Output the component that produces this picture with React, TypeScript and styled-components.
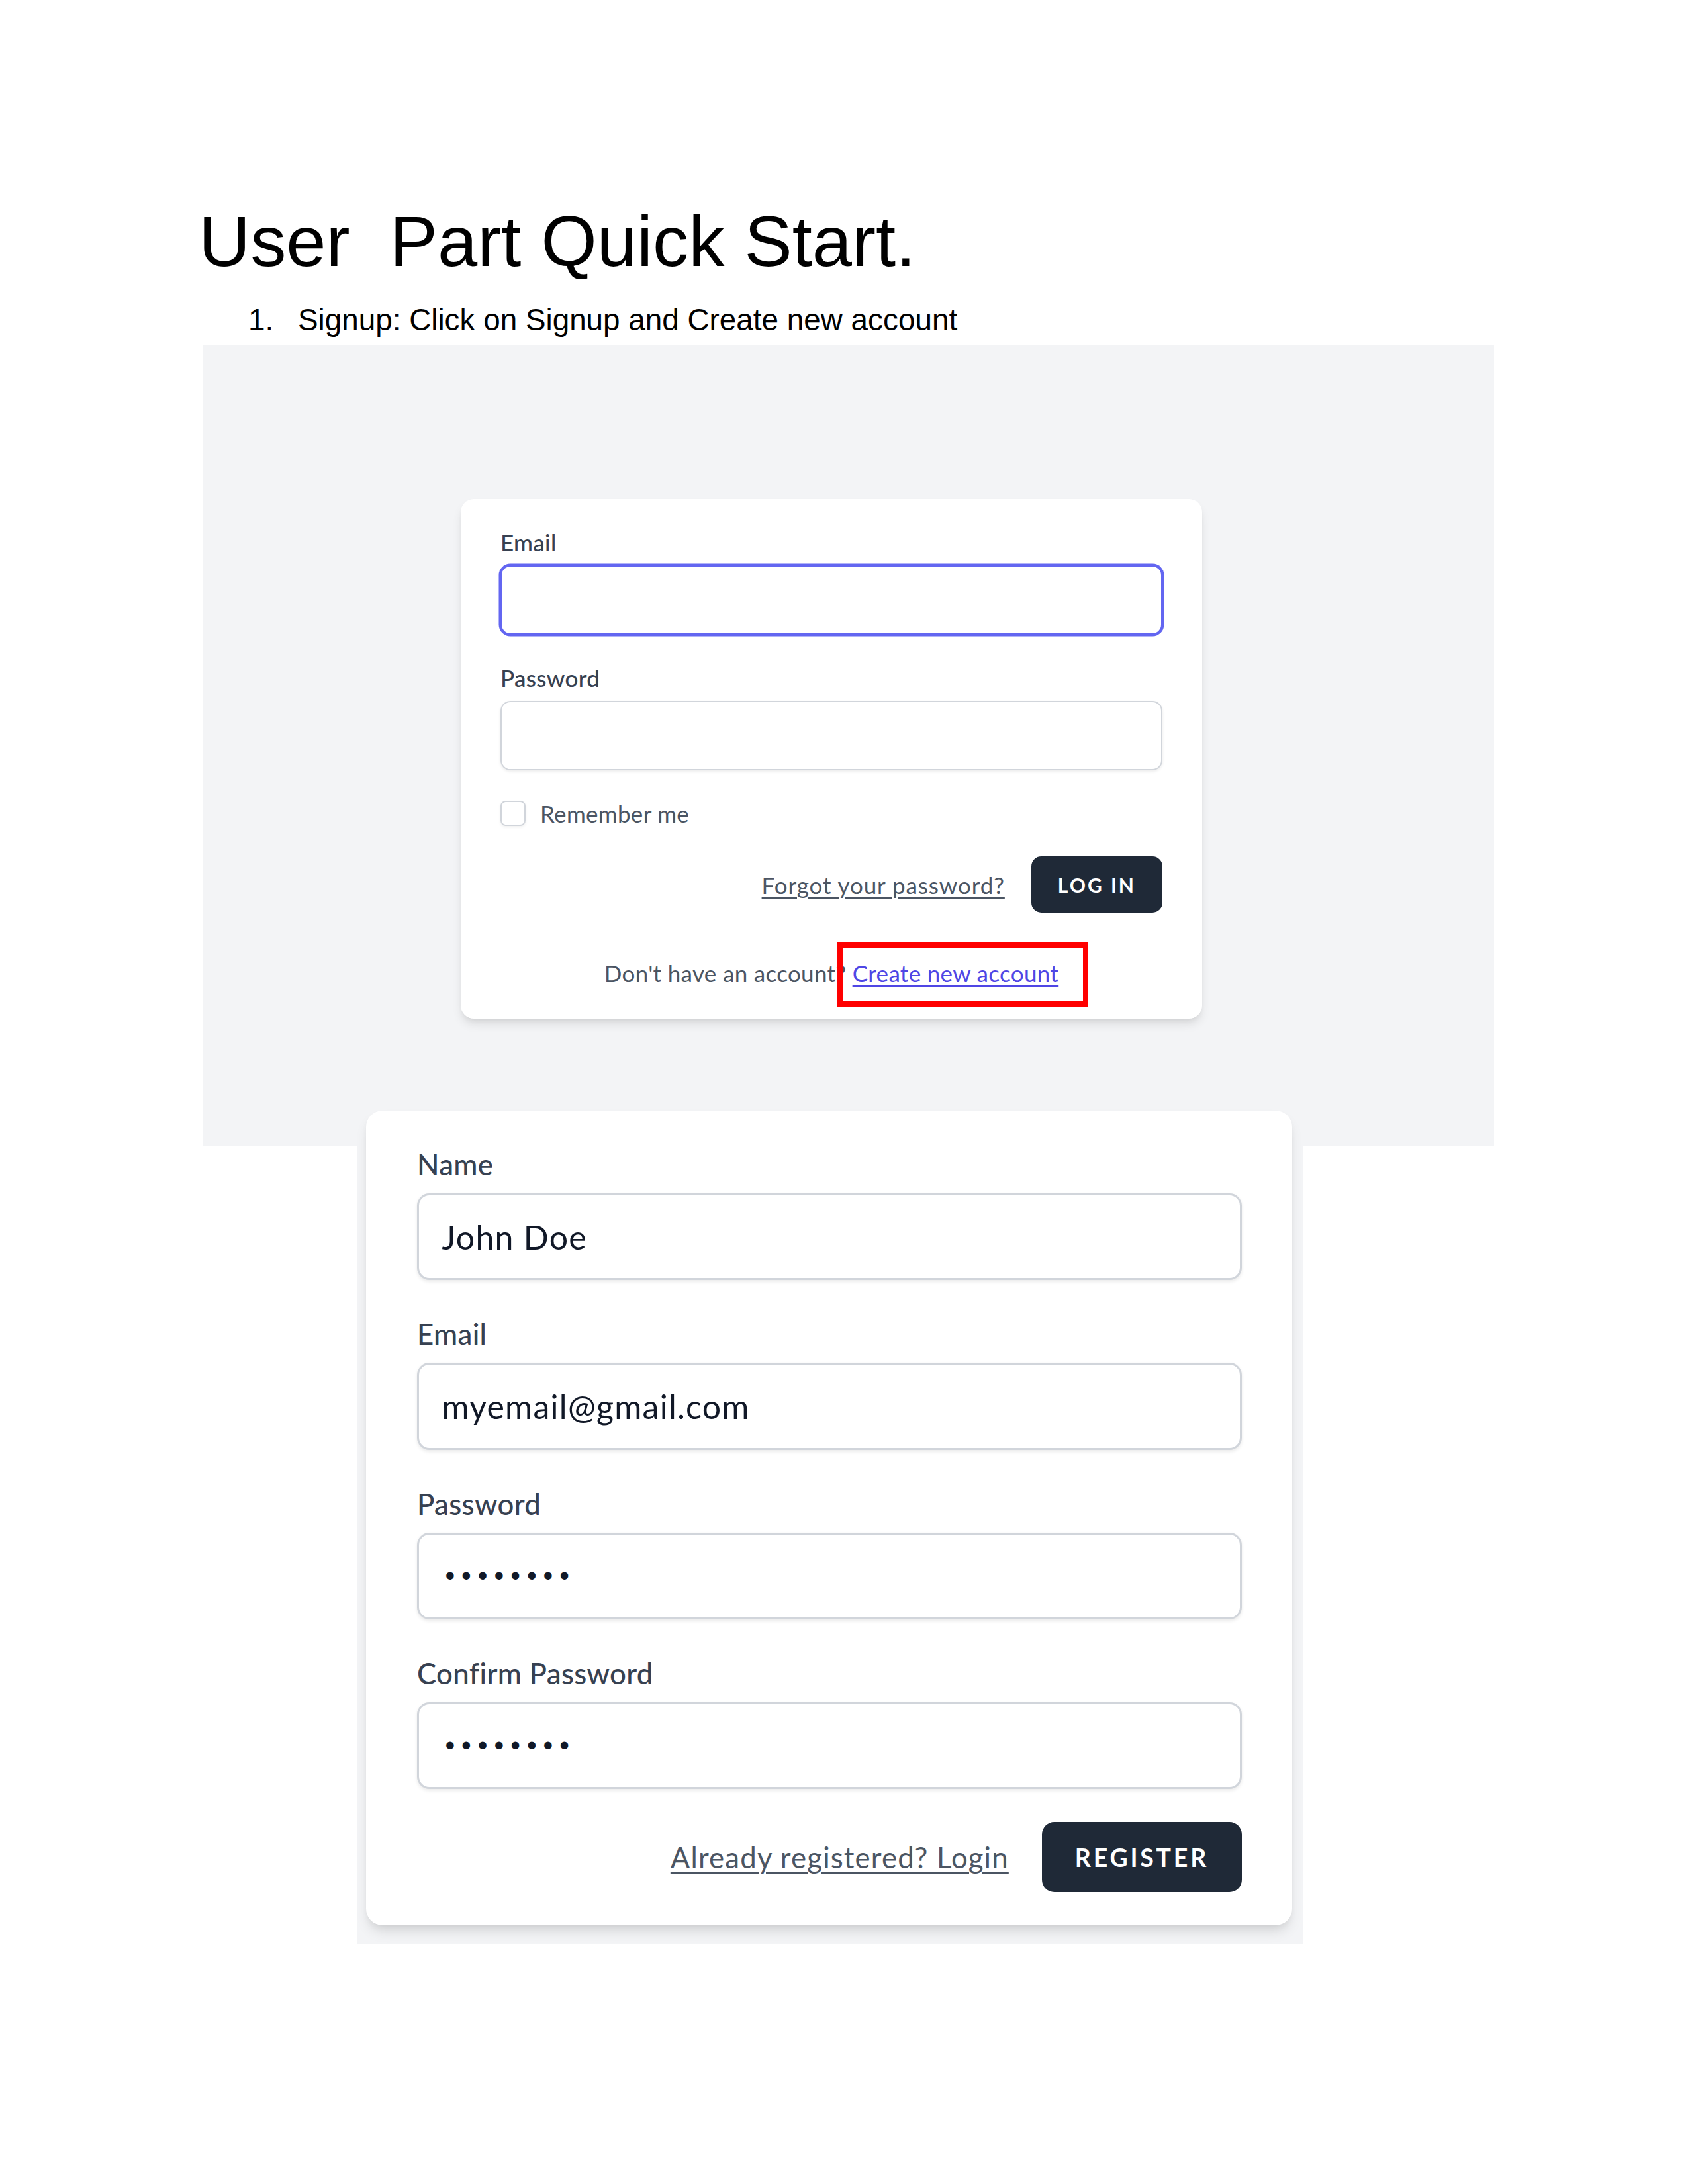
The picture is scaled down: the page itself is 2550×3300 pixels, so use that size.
import React from "react";
import styled, { createGlobalStyle } from "styled-components";

const Global = createGlobalStyle`
  html, body { margin: 0; padding: 0; background: #ffffff; }
  #root { width: 2550px; min-height: 3300px; }
  * { box-sizing: border-box; }
`;

const Page = styled.div`
  width: 2550px;
  min-height: 3300px;
  padding: 303px 0 0 300px;
  background: #ffffff;
  display: flex;
  flex-direction: column;
  align-items: flex-start;
`;

const Title = styled.h1`
  margin: 0;
  font-family: "Liberation Sans", Arial, sans-serif;
  font-weight: 400;
  font-size: 108.3px;
  line-height: 124px;
  color: #000;
  white-space: pre;
`;

const ListItem = styled.div`
  margin-top: 30px;
  display: flex;
  font-family: "Liberation Sans", Arial, sans-serif;
  font-size: 45.83px;
  line-height: 53px;
  color: #000;
`;

const ListNum = styled.span`
  width: 150px;
  padding-left: 75px;
`;

const LoginPanel = styled.section`
  margin: 11px 0 0 6px;
  width: 1951px;
  height: 1210px;
  background: #f3f4f6;
  padding: 233px 0 0 390px;
`;

const Card = styled.div<{ $scale: number; $w: number }>`
  width: ${(p) => p.$w}px;
  background: #ffffff;
  border-radius: ${(p) => 8 * p.$scale}px;
  box-shadow: 0 ${(p) => 4 * p.$scale}px ${(p) => 6 * p.$scale}px -${(p) => 1 * p.$scale}px rgba(0, 0, 0, 0.1),
    0 ${(p) => 2 * p.$scale}px ${(p) => 4 * p.$scale}px -${(p) => 2 * p.$scale}px rgba(0, 0, 0, 0.1);
  font-family: Lato, "Open Sans", sans-serif;
  letter-spacing: 0.02em;
`;

const LoginCard = styled(Card)`
  padding: 40px 60px 44px 60px;
`;

const RegisterFrame = styled.section`
  position: relative;
  margin: -65px 0 0 240px;
  width: 1429px;
  background: #f3f4f6;
  padding: 12px 17px 29px 13px;
`;

const RegisterCard = styled(Card)`
  padding: 50px 76px 50px 77px;
`;

const Group = styled.div<{ $gap: number }>`
  margin-top: ${(p) => p.$gap}px;
`;

const Label = styled.div<{ $size: number }>`
  font-size: ${(p) => p.$size}px;
  line-height: ${(p) => (p.$size * 20) / 14}px;
  font-weight: 500;
  color: #374151;
`;

const Field = styled.div<{ $scale: number; $focused?: boolean; $size: number }>`
  margin-top: ${(p) => 4 * p.$scale}px;
  height: ${(p) => 42 * p.$scale}px;
  border: ${(p) => p.$scale}px solid ${(p) => (p.$focused ? "#6366f1" : "#d1d5db")};
  border-radius: ${(p) => 6 * p.$scale}px;
  background: #fff;
  box-shadow: ${(p) =>
    p.$focused
      ? `0 0 0 ${p.$scale}px #6366f1`
      : `0 ${p.$scale * 0.8}px ${p.$scale * 1.6}px rgba(0, 0, 0, 0.08)`};
  display: flex;
  align-items: center;
  padding: 0 ${(p) => 12 * p.$scale - p.$scale}px;
  font-size: ${(p) => p.$size}px;
  letter-spacing: 0.025em;
  color: #111827;
  white-space: pre;
`;

const Dots = styled.span`
  font-family: "Liberation Sans", Arial, sans-serif;
  font-size: 42px;
  letter-spacing: 10px;
  color: #111827;
  margin-left: 5px;
`;

const RememberRow = styled.label`
  margin-top: 40px;
  height: 50px;
  display: flex;
  align-items: center;
  gap: 22px;
  font-size: 35px;
  color: #4b5563;
`;

const Checkbox = styled.span`
  width: 38px;
  height: 38px;
  border: 2.5px solid #d1d5db;
  border-radius: 8px;
  background: #fff;
  box-shadow: 0 2px 4px rgba(0, 0, 0, 0.06);
`;

const Actions = styled.div<{ $scale: number }>`
  margin-top: ${(p) => 16 * p.$scale}px;
  display: flex;
  justify-content: flex-end;
  align-items: center;
  gap: ${(p) => 16 * p.$scale}px;
`;

const MutedLink = styled.a<{ $size: number }>`
  font-size: ${(p) => p.$size}px;
  line-height: ${(p) => (p.$size * 20) / 14}px;
  letter-spacing: 0.026em;
  color: #4b5563;
  text-decoration: underline;
  text-decoration-thickness: ${(p) => p.$size / 14}px;
  text-underline-offset: ${(p) => p.$size / 7}px;
  cursor: pointer;
`;

const DarkButton = styled.button<{ $scale: number }>`
  height: ${(p) => 34 * p.$scale}px;
  padding: 0 ${(p) => 16 * p.$scale}px;
  background: #1f2937;
  border: none;
  border-radius: ${(p) => 6 * p.$scale}px;
  color: #fff;
  font-family: Lato, "Open Sans", sans-serif;
  font-weight: 700;
  font-size: ${(p) => 12 * p.$scale}px;
  letter-spacing: ${(p) => 1.2 * p.$scale}px;
  text-transform: uppercase;
  display: flex;
  align-items: center;
  justify-content: center;
`;

const Footer = styled.div`
  margin-top: 66px;
  text-align: center;
  font-size: 35px;
  line-height: 50px;
  color: #4b5563;
  white-space: pre;
`;

const Highlighted = styled.span`
  position: relative;
  display: inline-block;
`;

const AccentLink = styled.a`
  color: #4f46e5;
  text-decoration: underline;
  text-decoration-thickness: 2.5px;
  text-underline-offset: 5px;
  cursor: pointer;
`;

const RedMark = styled.span`
  position: absolute;
  left: -23px;
  right: -45px;
  top: -21px;
  bottom: -26px;
  border: 8px solid #ff0000;
  pointer-events: none;
`;

export default function App() {
  const ls = 2.5;
  const rs = 3.125;
  return (
    <>
      <Global />
      <Page>
        <Title>User  Part Quick Start.</Title>
        <ListItem>
          <ListNum>1.</ListNum>
          <span>Signup: Click on Signup and Create new account</span>
        </ListItem>

        <LoginPanel>
          <LoginCard $scale={ls} $w={1120}>
            <Group $gap={0}>
              <Label $size={35}>Email</Label>
              <Field $scale={ls} $size={35} $focused />
            </Group>
            <Group $gap={40}>
              <Label $size={35}>Password</Label>
              <Field $scale={ls} $size={35} />
            </Group>
            <RememberRow>
              <Checkbox />
              <span>Remember me</span>
            </RememberRow>
            <Actions $scale={ls}>
              <MutedLink $size={35}>Forgot your password?</MutedLink>
              <DarkButton $scale={ls}>Log in</DarkButton>
            </Actions>
            <Footer>
              {"Don't have an account? "}
              <Highlighted>
                <AccentLink>Create new account</AccentLink>
                <RedMark />
              </Highlighted>
            </Footer>
          </LoginCard>
        </LoginPanel>

        <RegisterFrame>
          <RegisterCard $scale={rs} $w={1399}>
            <Group $gap={0}>
              <Label $size={43.75}>Name</Label>
              <Field $scale={rs} $size={50}>John Doe</Field>
            </Group>
            <Group $gap={50}>
              <Label $size={43.75}>Email</Label>
              <Field $scale={rs} $size={50}>myemail@gmail.com</Field>
            </Group>
            <Group $gap={50}>
              <Label $size={43.75}>Password</Label>
              <Field $scale={rs} $size={50}>
                <Dots>••••••••</Dots>
              </Field>
            </Group>
            <Group $gap={50}>
              <Label $size={43.75}>Confirm Password</Label>
              <Field $scale={rs} $size={50}>
                <Dots>••••••••</Dots>
              </Field>
            </Group>
            <Actions $scale={rs}>
              <MutedLink $size={43.75}>Already registered? Login</MutedLink>
              <DarkButton $scale={rs}>Register</DarkButton>
            </Actions>
          </RegisterCard>
        </RegisterFrame>
      </Page>
    </>
  );
}
